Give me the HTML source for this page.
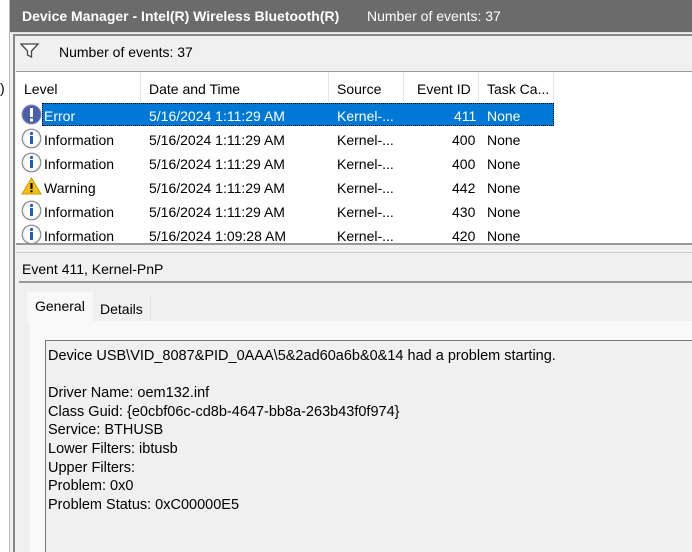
<!DOCTYPE html>
<html><head><style>
*{margin:0;padding:0;box-sizing:border-box}
body{width:692px;height:552px;overflow:hidden;background:#f0f0f0;font-family:"Liberation Sans",sans-serif;font-size:14.5px;color:#000;position:relative}
.a{position:absolute}
.row{position:absolute;left:16px;height:24px;width:540px;white-space:nowrap;font-size:14px}
.row span{position:absolute;top:4px}
</style></head><body>
<div class="a" style="left:0;top:0;width:9px;height:552px;background:#fff"></div>
<div class="a" style="left:0;top:80px;font-size:14px">)</div>
<div class="a" style="left:9px;top:0;width:1px;height:552px;background:#bbb"></div>
<div class="a" style="left:10px;top:0;width:682px;height:33px;background:#6b6b6b;border-bottom:1px solid #ddd"></div>
<div class="a" style="left:22px;top:8px;color:#fff;font-weight:bold;font-size:14px">Device Manager - Intel(R) Wireless Bluetooth(R)</div>
<div class="a" style="left:367px;top:8px;color:#fff;font-size:14px">Number of events: 37</div>
<div class="a" style="left:13px;top:34px;width:679px;height:518px;border-left:2px solid #888;border-top:2px solid #888;background:#f0f0f0"></div>
<svg class="a" style="left:20px;top:42px" width="20" height="16"><path d="M1 2h17l-6.5 7v6l-4-2v-4z" fill="#fff" stroke="#444" stroke-width="1.3"/></svg>
<div class="a" style="left:59px;top:44px;font-size:14px">Number of events: 37</div>
<div class="a" style="left:16px;top:71px;width:676px;height:174px;background:#fff;border-top:1px solid #999;border-bottom:2px solid #999"></div>
<div class="a" style="left:140px;top:72px;width:1px;height:30px;background:#e5e5e5"></div>
<div class="a" style="left:328px;top:72px;width:1px;height:30px;background:#e5e5e5"></div>
<div class="a" style="left:403px;top:72px;width:1px;height:30px;background:#e5e5e5"></div>
<div class="a" style="left:478px;top:72px;width:1px;height:30px;background:#e5e5e5"></div>
<div class="a" style="left:553px;top:72px;width:1px;height:30px;background:#e5e5e5"></div>
<div class="row" style="top:77px"><span style="left:8px">Level</span><span style="left:133px">Date and Time</span><span style="left:321px">Source</span><span style="left:401px">Event ID</span><span style="left:471px">Task Ca...</span></div>
<div class="a" style="left:42px;top:103px;width:512px;height:23px;background:#0078d7;border:1px dotted #000"></div>
<div class="row" style="top:104px;color:#fff"><span style="left:28px">Error</span><span style="left:133px">5/16/2024 1:11:29 AM</span><span style="left:321px">Kernel-...</span><span style="left:438px">411</span><span style="left:471px">None</span></div>
<svg class="a" style="left:21px;top:104px" width="21" height="21"><circle cx="10.5" cy="10.5" r="9.5" fill="#4b5fa8" stroke="#8a93c4"/><rect x="9" y="4" width="3" height="9" fill="#fff"/><rect x="9" y="14.5" width="3" height="3" fill="#fff"/></svg>
<div class="row" style="top:128px"><span style="left:28px">Information</span><span style="left:133px">5/16/2024 1:11:29 AM</span><span style="left:321px">Kernel-...</span><span style="left:436px">400</span><span style="left:471px">None</span></div>
<div class="row" style="top:152px"><span style="left:28px">Information</span><span style="left:133px">5/16/2024 1:11:29 AM</span><span style="left:321px">Kernel-...</span><span style="left:436px">400</span><span style="left:471px">None</span></div>
<div class="row" style="top:176px"><span style="left:28px">Warning</span><span style="left:133px">5/16/2024 1:11:29 AM</span><span style="left:321px">Kernel-...</span><span style="left:436px">442</span><span style="left:471px">None</span></div>
<div class="row" style="top:200px"><span style="left:28px">Information</span><span style="left:133px">5/16/2024 1:11:29 AM</span><span style="left:321px">Kernel-...</span><span style="left:436px">430</span><span style="left:471px">None</span></div>
<div class="row" style="top:224px"><span style="left:28px">Information</span><span style="left:133px">5/16/2024 1:09:28 AM</span><span style="left:321px">Kernel-...</span><span style="left:436px">420</span><span style="left:471px">None</span></div>
<svg class="a" style="left:21px;top:128px" width="21" height="118">
<defs><g id="i"><circle cx="10.5" cy="10.5" r="9.3" fill="#f4f4f4" stroke="#888" stroke-width="1.2"/><circle cx="10.5" cy="10.5" r="7" fill="#fff"/><circle cx="10.5" cy="5.5" r="1.6" fill="#1d5fbf"/><rect x="9" y="8" width="3" height="8" fill="#1d5fbf"/></g></defs>
<use href="#i"/><use href="#i" y="24"/><use href="#i" y="72"/><use href="#i" y="96"/>
<path d="M10.5 50L20 66H1z" fill="#f4c20d" stroke="#c99a00"/><rect x="9.4" y="55" width="2.2" height="6" fill="#000"/><rect x="9.4" y="62.3" width="2.2" height="2" fill="#000"/>
</svg>
<div class="a" style="left:16px;top:252px;width:676px;height:1px;background:#ccc"></div>
<div class="a" style="left:22px;top:261px;font-size:14px">Event 411, Kernel-PnP</div>
<div class="a" style="left:19px;top:281px;width:673px;height:2px;background:#999"></div>
<div class="a" style="left:27px;top:292px;width:66px;height:31px;background:#f9f9f9"></div>
<div class="a" style="left:35px;top:298px;font-size:14px">General</div>
<div class="a" style="left:93px;top:296px;width:58px;height:27px;background:#f0f0f0;border-right:1px solid #e3e3e3"></div>
<div class="a" style="left:100px;top:301px;font-size:14px">Details</div>
<div class="a" style="left:30px;top:321px;width:662px;height:231px;background:#f9f9f9"></div>
<div class="a" style="left:45px;top:340px;width:647px;height:212px;background:#f0f0f0;border-left:1px solid #777;border-top:1px solid #777"></div>
<div class="a" style="left:48px;top:347px;line-height:18.6px;white-space:pre">Device USB\VID_8087&amp;PID_0AAA\5&amp;2ad60a6b&amp;0&amp;14 had a problem starting.

Driver Name: oem132.inf
Class Guid: {e0cbf06c-cd8b-4647-bb8a-263b43f0f974}
Service: BTHUSB
Lower Filters: ibtusb
Upper Filters:
Problem: 0x0
Problem Status: 0xC00000E5</div>
</body></html>
